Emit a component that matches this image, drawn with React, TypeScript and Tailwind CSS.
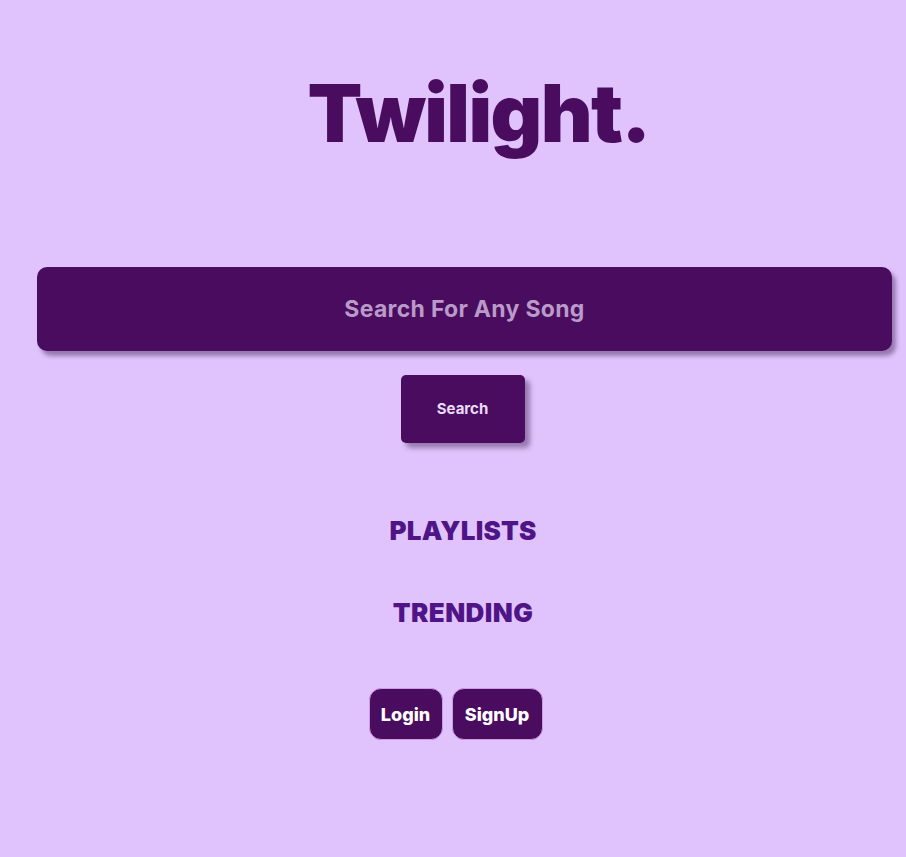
import { useState } from 'react';

const App = () => {
  const [query, setQuery] = useState('');

  return (
    <div
      className="min-h-[857px] w-full bg-[#e0c3fc] pl-[37px] pr-[14px]"
      style={{ fontFamily: 'Inter, "Noto Sans", sans-serif' }}
    >
      <div className="flex justify-center pt-[58px] pl-[28px]">
        <h1 className="text-[80px] font-black leading-[110px] tracking-[-1.6px] text-[#4a0c5f]">
          Twilight.
        </h1>
      </div>

      <div className="mt-[99px] flex flex-col items-center">
        <input
          value={query}
          onChange={(e) => setQuery(e.target.value)}
          placeholder="Search For Any Song"
          className="h-[84px] w-full rounded-[10px] bg-[#4a0c5f] text-center text-[23px] font-bold tracking-[0.3px] text-[#e0c3fc] shadow-[4px_5px_4px_rgba(60,30,80,0.45)] outline-none placeholder:text-[#b99ac9]"
        />
        <button className="mt-[24px] mr-[4px] h-[68px] w-[124px] rounded-[5px] bg-[#4a0c5f] text-[15px] font-bold text-[#eadcf5] shadow-[5px_5px_5px_rgba(60,30,80,0.45)]">
          Search
        </button>
      </div>

      <div className="mt-[71px] mr-[3px] flex flex-col items-center gap-[48px]">
        <a className="text-[26px] font-black leading-[34px] tracking-[0.2px] text-[#4f1486]">PLAYLISTS</a>
        <a className="text-[26px] font-black leading-[34px] tracking-[0.4px] text-[#4f1486]">TRENDING</a>
      </div>

      <div className="mt-[58px] flex justify-center gap-[9px] pr-[18px]">
        <button className="h-[52px] w-[74px] rounded-[12px] border border-[#c99be0] bg-[#4a0c5f] text-[18px] font-extrabold text-white">
          Login
        </button>
        <button className="h-[52px] w-[91px] rounded-[12px] border border-[#c99be0] bg-[#4a0c5f] text-[18px] font-extrabold text-white">
          SignUp
        </button>
      </div>
    </div>
  );
};

export default App;
